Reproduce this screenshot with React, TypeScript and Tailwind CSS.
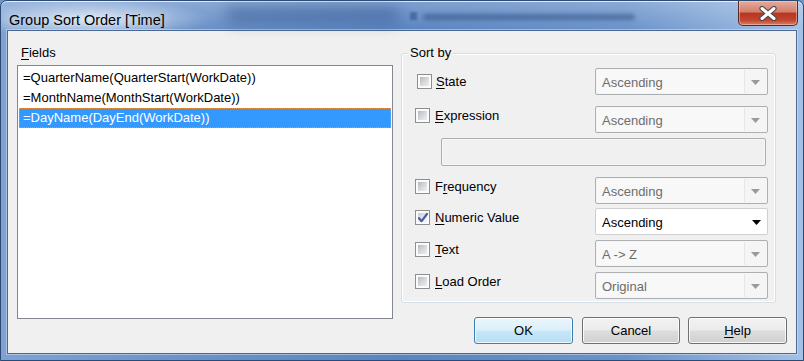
import React from "react";

const U = ({ children }: { children: React.ReactNode }) => (
  <span className="underline decoration-1 underline-offset-[2px]">{children}</span>
);

function Checkbox({ checked = false }: { checked?: boolean }) {
  return (
    <div className="relative w-[15px] h-[15px] shrink-0 border border-[#8e8f8f] bg-[#fbfbfb] p-[2px]">
      <div
        className={
          checked
            ? "w-full h-full bg-[linear-gradient(135deg,#c9ccd1_0%,#e4e5e7_50%,#f6f6f6_100%)]"
            : "w-full h-full bg-[linear-gradient(135deg,#b3b7bd_0%,#d3d5d8_45%,#efeff0_100%)]"
        }
      />
      {checked && (
        <svg className="absolute left-0 top-0" width="14" height="14" viewBox="0 0 14 14">
          <path
            d="M3 7.2 L5.6 10.2 L11 3"
            fill="none"
            stroke="#4b5f9f"
            strokeWidth="2.2"
            strokeLinecap="round"
            strokeLinejoin="round"
          />
        </svg>
      )}
    </div>
  );
}

function Arrow({ color }: { color: string }) {
  return (
    <svg width="9" height="5" viewBox="0 0 9 5">
      <path d="M0 0H9L4.5 5Z" fill={color} />
    </svg>
  );
}

function Combo({ text, enabled = false }: { text: string; enabled?: boolean }) {
  if (enabled) {
    return (
      <div className="w-[173px] h-[27px] shrink-0 rounded-[2px] border border-[#cfcfcf] bg-white flex items-center">
        <div className="flex-1 pl-[6px] pt-[1px] text-[13px] leading-[15px] text-black">{text}</div>
        <div className="w-[22px] flex justify-center pt-[1px]">
          <Arrow color="#000000" />
        </div>
      </div>
    );
  }
  return (
    <div className="w-[173px] h-[27px] shrink-0 rounded-[2px] border border-[#adb0b3] bg-[#f5f5f5] p-[1px] flex">
      <div className="flex-1 flex items-center pl-[5px] pt-[1px] border-r border-[#e6e6e6] bg-[#f8f8f8] text-[13px] leading-[15px] text-[#6d6d6d]">
        {text}
      </div>
      <div className="w-[21px] flex items-center justify-center pt-[1px]">
        <Arrow color="#9a9a9a" />
      </div>
    </div>
  );
}

function Btn({
  children,
  primary = false,
  className = "",
}: {
  children: React.ReactNode;
  primary?: boolean;
  className?: string;
}) {
  return (
    <div
      className={
        (primary
          ? "border-[#3c7fb1] bg-[linear-gradient(to_bottom,#eaf6fd_0%,#dcf0fa_48%,#c8e7f8_52%,#b6ddf3_100%)] "
          : "border-[#707070] bg-[linear-gradient(to_bottom,#f2f2f2_0%,#ebebeb_48%,#dddddd_52%,#cfcfcf_100%)] ") +
        "h-[27px] rounded-[3px] border shadow-[inset_0_0_0_1px_rgba(255,255,255,0.8)] flex items-center justify-center text-[13px] leading-[15px] text-black " +
        className
      }
    >
      {children}
    </div>
  );
}

export default function App() {
  return (
    <div className="w-[804px] h-[361px] overflow-hidden font-['Liberation_Sans',Arial,sans-serif] bg-[#6f97cc]">
      <div className="w-full h-full flex flex-col rounded-t-[7px] border border-[#2f4a72] shadow-[inset_0_1px_0_rgba(255,255,255,0.75)] bg-[image:radial-gradient(ellipse_120px_20px_at_90px_18px,rgba(232,240,250,0.85),rgba(232,240,250,0)),linear-gradient(to_bottom,rgba(255,255,255,0.22),rgba(255,255,255,0)_28px),linear-gradient(to_right,#7fa2d4_0%,#6a91c8_25%,#5b85c1_50%,#6b93ca_78%,#a3c0e5_100%)]">
        {/* title bar */}
        <div className="h-[29px] flex items-start shrink-0">
          <div className="ml-[8px] mt-[10px] text-[14.5px] leading-[18px] text-black whitespace-nowrap [text-shadow:0_0_8px_rgba(255,255,255,0.9)]">
            Group Sort Order [Time]
          </div>
          <div className="ml-[60px] mt-[6px] w-[175px] h-[17px] rounded-full bg-[#34588f] opacity-50 blur-[7px]" />
          <div className="ml-[10px] mt-[11px] w-[7px] h-[8px] bg-[#2a4a7e] opacity-50 blur-[1px]" />
          <div className="ml-[6px] mt-[13px] w-[212px] h-[6px] rounded-full bg-[#1f3e72] opacity-45 blur-[2px]" />
          <div className="flex-1" />
          <div className="mr-[5px] w-[60px] h-[25px] rounded-b-[5px] border border-t-0 border-[#5a2a22] bg-[linear-gradient(to_bottom,#e6ab9c_0%,#d37f6b_45%,#b73621_52%,#c24630_80%,#d88064_100%)] shadow-[inset_0_0_0_1px_rgba(255,220,210,0.45)] flex items-center justify-center">
            <svg width="20" height="15" viewBox="0 0 20 15">
              <path d="M4 2.5 L16 12.5 M16 2.5 L4 12.5" stroke="#4a4a4a" strokeWidth="5.2" strokeLinecap="round" />
              <path d="M4 2.5 L16 12.5 M16 2.5 L4 12.5" stroke="#ffffff" strokeWidth="3" strokeLinecap="round" />
            </svg>
          </div>
        </div>

        {/* client */}
        <div className="px-[6px] shrink-0">
          <div className="border border-[#4a6891] shadow-[0_0_0_1px_rgba(220,232,246,0.5)]">
            <div className="h-[322px] bg-[#f0f0f0] flex pl-[9px] pr-[9px] text-[13px] text-black">
              {/* left column */}
              <div className="w-[376px] pt-[14px] flex flex-col">
                <div className="h-[15px] leading-[15px] pl-[4px]">
                  <U>F</U>ields
                </div>
                <div className="mt-[5px] h-[254px] border border-[#828790] bg-white px-[1px] pt-[2px] leading-[20px]">
                  <div className="h-[20px] pl-[4px] whitespace-nowrap">=QuarterName(QuarterStart(WorkDate))</div>
                  <div className="h-[20px] pl-[4px] whitespace-nowrap">=MonthName(MonthStart(WorkDate))</div>
                  <div className="h-[20px] pl-[3px] leading-[18px] whitespace-nowrap bg-[#3399ff] text-white border border-dotted border-[#e8913f]">
                    =DayName(DayEnd(WorkDate))
                  </div>
                </div>
              </div>

              {/* right column */}
              <div className="ml-[8px] w-[386px] pt-[22px] flex flex-col">
                <div className="relative w-[375px] h-[250px] rounded-[3px] border border-[#d5dfe5] shadow-[inset_0_0_0_1px_#ffffff] pl-[13px] pr-[7px] pt-[14px]">
                  <span className="absolute left-[6px] top-[-9px] px-[2px] bg-[#f0f0f0] leading-[15px]">Sort by</span>

                  <div className="h-[27px] flex items-center justify-between">
                    <div className="flex items-center ml-[2px]">
                      <Checkbox />
                      <span className="ml-[4px] leading-[15px]">
                        <U>S</U>tate
                      </span>
                    </div>
                    <Combo text="Ascending" />
                  </div>

                  <div className="mt-[11px] h-[27px] flex items-start justify-between">
                    <div className="flex items-center mt-[2px]">
                      <Checkbox />
                      <span className="ml-[5px] leading-[15px]">
                        <U>E</U>xpression
                      </span>
                    </div>
                    <Combo text="Ascending" />
                  </div>

                  <div className="mt-[5px] ml-[26px] w-[325px] h-[28px] rounded-[2px] border border-[#adadad] bg-[#f0f0f0] shadow-[inset_0_0_0_1px_#f7f7f7]" />

                  <div className="mt-[11px] h-[27px] flex items-start justify-between">
                    <div className="flex items-center mt-[2px]">
                      <Checkbox />
                      <span className="ml-[5px] leading-[15px]">
                        F<U>r</U>equency
                      </span>
                    </div>
                    <Combo text="Ascending" />
                  </div>

                  <div className="mt-[4px] h-[27px] flex items-start justify-between">
                    <div className="flex items-center mt-[2px]">
                      <Checkbox checked />
                      <span className="ml-[5px] leading-[15px]">
                        <U>N</U>umeric Value
                      </span>
                    </div>
                    <Combo text="Ascending" enabled />
                  </div>

                  <div className="mt-[5px] h-[27px] flex items-start justify-between">
                    <div className="flex items-center mt-[2px]">
                      <Checkbox />
                      <span className="ml-[5px] leading-[15px]">
                        <U>T</U>ext
                      </span>
                    </div>
                    <Combo text="A -> Z" />
                  </div>

                  <div className="mt-[5px] h-[27px] flex items-start justify-between">
                    <div className="flex items-center mt-[2px]">
                      <Checkbox />
                      <span className="ml-[5px] leading-[15px]">
                        <U>L</U>oad Order
                      </span>
                    </div>
                    <Combo text="Original" />
                  </div>
                </div>

                <div className="mt-[14px] flex">
                  <Btn primary className="ml-[73px] w-[99px]">
                    OK
                  </Btn>
                  <Btn className="ml-[9px] w-[98px]">Cancel</Btn>
                  <Btn className="ml-[8px] w-[99px]">
                    <U>H</U>elp
                  </Btn>
                </div>
              </div>
            </div>
          </div>
        </div>
        <div className="flex-1" />
      </div>
    </div>
  );
}
